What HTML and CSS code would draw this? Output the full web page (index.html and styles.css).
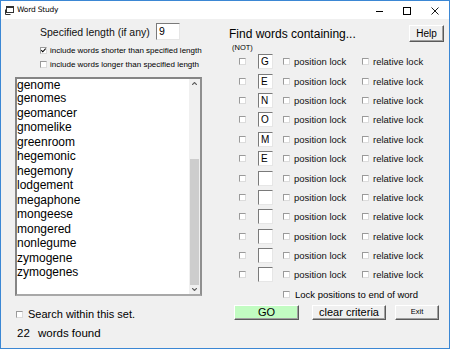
FILE: index.html
```html
<!DOCTYPE html>
<html lang="en">
<head>
<meta charset="utf-8">
<title>Word Study</title>
<link rel="stylesheet" href="styles.css">
</head>
<body>
<div class="window">
  <header class="titlebar">
    <svg class="appicon" width="9" height="9" viewBox="0 0 9 9">
      <rect x="1.5" y="0.5" width="7" height="6" fill="#fff" stroke="#333"/>
      <rect x="1.5" y="0.5" width="7" height="1.5" fill="#333"/>
      <path d="M0.5 3.5 V8.5 H5.5" fill="none" stroke="#333"/>
    </svg>
    <span class="title">Word Study</span>
    <div class="controls">
      <span class="ctl"><svg width="8" height="8" viewBox="0 0 8 8"><path d="M1 4.5 H8" stroke="#000" stroke-width="1"/></svg></span>
      <span class="ctl"><svg width="8" height="8" viewBox="0 0 8 8"><rect x="0.5" y="0.5" width="7" height="7" fill="none" stroke="#000"/></svg></span>
      <span class="ctl"><svg width="8" height="8" viewBox="0 0 8 8"><path d="M0.5 0.5 L7.5 7.5 M7.5 0.5 L0.5 7.5" stroke="#000" stroke-width="0.9"/></svg></span>
    </div>
  </header>
  <main class="client">
    <section class="left">
      <div class="spec">
        <span class="spec-label">Specified length (if any)</span>
        <span class="field">9</span>
      </div>
      <label class="opt first"><span class="cb"><svg width="5" height="5" viewBox="0 0 5 5"><path d="M0.3 2.2 L1.8 3.8 L4.7 0.6" fill="none" stroke="#000" stroke-width="1.1"/></svg></span>include words shorter than specified length</label>
      <label class="opt"><span class="cb"></span>include words longer than specified length</label>
      <div class="listbox">
        <ul class="items">
          <li>genome</li>
          <li>genomes</li>
          <li>geomancer</li>
          <li>gnomelike</li>
          <li>greenroom</li>
          <li>hegemonic</li>
          <li>hegemony</li>
          <li>lodgement</li>
          <li>megaphone</li>
          <li>mongeese</li>
          <li>mongered</li>
          <li>nonlegume</li>
          <li>zymogene</li>
          <li>zymogenes</li>
        </ul>
        <div class="scrollbar">
          <span class="sb-btn"><svg width="5" height="3" viewBox="0 0 5 3"><path d="M0 3 L2.5 0.5 L5 3" fill="none" stroke="#606060" stroke-width="1.2"/></svg></span>
          <div class="track"><div class="thumb"></div></div>
          <span class="sb-btn"><svg width="5" height="3" viewBox="0 0 5 3"><path d="M0 0 L2.5 2.5 L5 0" fill="none" stroke="#606060" stroke-width="1.2"/></svg></span>
        </div>
      </div>
      <label class="search"><span class="cb"></span>Search within this set.</label>
      <div class="found"><span class="count">22</span><span>words found</span></div>
    </section>
    <section class="right">
      <div class="head">
        <span class="find">Find words containing...</span>
        <button class="btn help">Help</button>
      </div>
      <div class="not">(NOT)</div>
      <div class="rows">
        <div class="row"><span class="cb"></span><span class="letter">G</span><span class="lock pos"><span class="cb"></span>position lock</span><span class="lock"><span class="cb"></span>relative lock</span></div>
        <div class="row"><span class="cb"></span><span class="letter">E</span><span class="lock pos"><span class="cb"></span>position lock</span><span class="lock"><span class="cb"></span>relative lock</span></div>
        <div class="row"><span class="cb"></span><span class="letter">N</span><span class="lock pos"><span class="cb"></span>position lock</span><span class="lock"><span class="cb"></span>relative lock</span></div>
        <div class="row"><span class="cb"></span><span class="letter">O</span><span class="lock pos"><span class="cb"></span>position lock</span><span class="lock"><span class="cb"></span>relative lock</span></div>
        <div class="row"><span class="cb"></span><span class="letter">M</span><span class="lock pos"><span class="cb"></span>position lock</span><span class="lock"><span class="cb"></span>relative lock</span></div>
        <div class="row"><span class="cb"></span><span class="letter">E</span><span class="lock pos"><span class="cb"></span>position lock</span><span class="lock"><span class="cb"></span>relative lock</span></div>
        <div class="row"><span class="cb"></span><span class="letter"></span><span class="lock pos"><span class="cb"></span>position lock</span><span class="lock"><span class="cb"></span>relative lock</span></div>
        <div class="row"><span class="cb"></span><span class="letter"></span><span class="lock pos"><span class="cb"></span>position lock</span><span class="lock"><span class="cb"></span>relative lock</span></div>
        <div class="row"><span class="cb"></span><span class="letter"></span><span class="lock pos"><span class="cb"></span>position lock</span><span class="lock"><span class="cb"></span>relative lock</span></div>
        <div class="row"><span class="cb"></span><span class="letter"></span><span class="lock pos"><span class="cb"></span>position lock</span><span class="lock"><span class="cb"></span>relative lock</span></div>
        <div class="row"><span class="cb"></span><span class="letter"></span><span class="lock pos"><span class="cb"></span>position lock</span><span class="lock"><span class="cb"></span>relative lock</span></div>
        <div class="row"><span class="cb"></span><span class="letter"></span><span class="lock pos"><span class="cb"></span>position lock</span><span class="lock"><span class="cb"></span>relative lock</span></div>
      </div>
      <label class="endlock"><span class="cb"></span>Lock positions to end of word</label>
      <div class="actions">
        <button class="btn go">GO</button>
        <button class="btn clear">clear criteria</button>
        <button class="btn exit">Exit</button>
      </div>
    </section>
  </main>
</div>
</body>
</html>
```
FILE: styles.css
```css
* { box-sizing: border-box; }
html, body { margin: 0; padding: 0; }
body {
  width: 450px;
  height: 349px;
  font-family: "Liberation Sans", Arial, sans-serif;
  color: #000;
  background: #f0f0f0;
}
.window {
  width: 450px;
  height: 349px;
  border: 1px solid #3b87d4;
  display: flex;
  flex-direction: column;
  background: #f0f0f0;
}
.titlebar {
  height: 18px;
  background: #fff;
  display: flex;
  align-items: center;
  flex: none;
}
.appicon { margin-left: 4px; margin-top: 1px; }
.title {
  margin-left: 3px;
  font-size: 7.5px;
  line-height: 18px;
  font-family: "DejaVu Sans", "Liberation Sans", sans-serif;
  letter-spacing: -0.2px;
}
.controls { margin-left: auto; display: flex; height: 18px; }
.ctl {
  width: 28px;
  height: 18px;
  display: flex;
  align-items: center;
  justify-content: center;
  padding-top: 1px;
}
.client { flex: 1; display: flex; }
.left { width: 224px; flex: none; display: flex; flex-direction: column; }
.right { flex: 1; display: flex; flex-direction: column; }

.cb {
  width: 7px;
  height: 7px;
  flex: none;
  background: #fff;
  border: 1px solid;
  border-color: #9a9a9a #dcdcdc #dcdcdc #9a9a9a;
  display: flex;
  align-items: center;
  justify-content: center;
}
.cb svg { display: block; }

.spec {
  margin-top: 4px;
  padding-left: 39px;
  height: 17px;
  display: flex;
  align-items: center;
}
.spec-label { width: 116px; font-size: 10.5px; color: #111; }
.field {
  width: 24px;
  height: 17px;
  background: #fff;
  border: 1px solid;
  border-color: #7a7a7a #e6e6e6 #e6e6e6 #7a7a7a;
  font-size: 10.5px;
  line-height: 15px;
  padding-left: 2px;
}
.opt {
  display: flex;
  align-items: center;
  gap: 3px;
  height: 13px;
  padding-left: 39px;
  font-size: 8px;
  margin-top: 1px;
}
.opt.first { margin-top: 4px; }

.listbox {
  margin: 6px 0 0 14px;
  width: 187px;
  height: 219px;
  border: 2px solid #858585;
  border-right-color: #8f8f8f;
  border-bottom-color: #a8a8a8;
  background: #fff;
  display: flex;
}
.items {
  flex: 1;
  margin: 0;
  padding: 0;
  list-style: none;
  overflow: hidden;
  font-size: 12px;
  line-height: 14.5px;
}
.items li:first-child { line-height: 13.8px; margin-bottom: -1.8px; }
.scrollbar {
  width: 11px;
  flex: none;
  background: #f0f0f0;
  display: flex;
  flex-direction: column;
}
.sb-btn {
  height: 9px;
  flex: none;
  display: flex;
  align-items: center;
  justify-content: center;
}
.track {
  flex: 1;
  display: flex;
  flex-direction: column;
  justify-content: flex-end;
}
.thumb { height: 126px; margin: 0 1px; background: #cdcdcd; }

.search {
  margin-top: 11px;
  height: 14px;
  padding-left: 15px;
  display: flex;
  align-items: center;
  gap: 5px;
  font-size: 11px;
}
.found {
  margin-top: 5px;
  height: 14px;
  padding-left: 16px;
  display: flex;
  align-items: center;
  font-size: 11.5px;
}
.count { width: 21px; }

.head {
  margin-top: 6px;
  height: 17px;
  padding: 0 5px 0 4px;
  display: flex;
  align-items: center;
  justify-content: space-between;
}
.find { font-size: 12px; }
.btn {
  font-family: "Liberation Sans", Arial, sans-serif;
  color: #000;
  background: #f0f0f0;
  border: 1px solid;
  border-color: #ffffff #5a5a5a #5a5a5a #ffffff;
  box-shadow: inset -1px -1px 0 #a0a0a0;
  padding: 0;
  margin: 0;
  height: 15px;
  line-height: 12px;
}
.help { width: 35px; height: 17px; font-size: 10px; }
.not {
  margin-top: 2px;
  height: 8px;
  line-height: 8px;
  padding-left: 7px;
  font-size: 7.5px;
}
.rows { margin-top: 0; }
.row {
  height: 19.4px;
  display: flex;
  align-items: center;
  padding-left: 14px;
}
.letter {
  margin-left: 12px;
  width: 15px;
  height: 15px;
  background: #fff;
  border: 1px solid;
  border-color: #7a7a7a #e6e6e6 #e6e6e6 #7a7a7a;
  font-size: 10px;
  line-height: 13px;
  padding-left: 2px;
}
.lock {
  display: flex;
  align-items: center;
  gap: 4px;
  font-size: 9.5px;
  color: #111;
}
.lock.pos { margin-left: 10px; width: 79px; }
.endlock {
  margin-top: 4px;
  height: 12px;
  padding-left: 58px;
  display: flex;
  align-items: center;
  gap: 5px;
  font-size: 9.5px;
}
.actions {
  margin-top: 4px;
  padding-left: 9px;
  display: flex;
}
.go { width: 65px; background: #c2fcc2; font-size: 11px; }
.clear { width: 74px; margin-left: 13px; font-size: 11px; }
.exit { width: 44px; margin-left: 9px; font-size: 7.5px; }
```
